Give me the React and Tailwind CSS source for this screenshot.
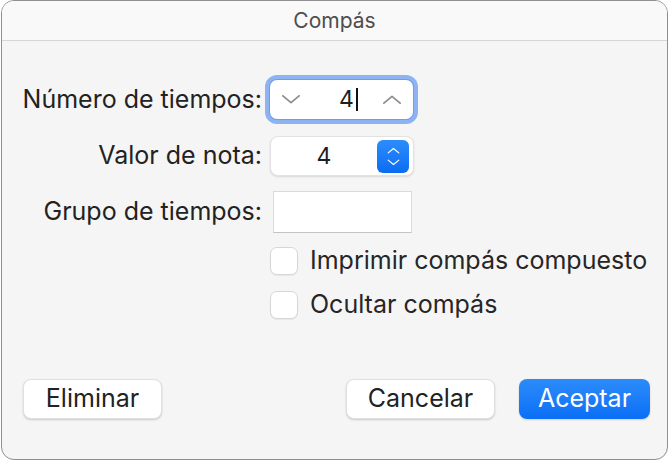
import React from "react";

const font = { fontFamily: "Inter, 'Liberation Sans', sans-serif" };

function Chevron({ up, className }) {
  return (
    <svg viewBox="0 0 22 10" className={className} fill="none">
      <path
        d={up ? "M2 9 L11 1.5 L20 9" : "M2 1 L11 8.5 L20 1"}
        stroke="currentColor"
        strokeWidth="2"
        strokeLinecap="round"
        strokeLinejoin="round"
      />
    </svg>
  );
}

function Checkbox({ label }) {
  return (
    <div className="flex items-center h-[28px]">
      <div className="w-[28px] h-[28px] rounded-[7px] bg-white border border-[#d6d6d6] shadow-[0_1px_1px_rgba(0,0,0,0.06)]" />
      <span className="ml-[12px] text-[25px] text-[#262626]">{label}</span>
    </div>
  );
}

export default function App() {
  return (
    <div className="w-[670px] h-[463px] bg-white" style={font}>
      <div className="ml-[1px] w-[667px] h-[460px] rounded-[13px] border border-[#8f8f8f] bg-[#f5f5f5] overflow-hidden flex flex-col">
        {/* Title bar */}
        <div className="h-[40px] shrink-0 bg-[#f9f9f9] border-b border-[#d6d6d6] flex items-center justify-center">
          <span className="text-[21px] text-[#4d4d4d]">Compás</span>
        </div>

        <div className="flex flex-col pt-[39px]">
          {/* Número de tiempos */}
          <div className="flex items-center h-[39px]">
            <div className="w-[260px] text-right text-[25px] text-[#222]">Número de tiempos:</div>
            <div className="ml-[8px] w-[143px] h-[39px] rounded-[7px] bg-white shadow-[0_0_0_1px_#6d9ded,0_0_0_5px_#8db3f3] flex items-center px-[10px]">
              <Chevron className="w-[22px] h-[9px] text-[#8e8e8e]" />
              <div className="flex-1 flex items-center justify-center pl-[14px]">
                <span className="text-[23px] text-[#1f1f1f] leading-none">4</span>
                <span className="ml-[2px] w-[2px] h-[23px] bg-[#111]" />
              </div>
              <Chevron up className="w-[22px] h-[9px] text-[#8e8e8e]" />
            </div>
          </div>

          {/* Valor de nota */}
          <div className="flex items-center h-[40px] mt-[17px]">
            <div className="w-[260px] text-right text-[25px] text-[#222]">Valor de nota:</div>
            <div className="ml-[8px] w-[144px] h-[40px] rounded-[8px] bg-white border border-[#e2e2e2] shadow-[0_1px_2px_rgba(0,0,0,0.12)] flex items-center pr-[4px]">
              <div className="flex-1 text-center text-[23px] text-[#1f1f1f]">4</div>
              <div className="w-[32px] h-[33px] rounded-[6px] bg-gradient-to-b from-[#2d8cfb] to-[#0a6cf3] flex flex-col items-center justify-center gap-[5px]">
                <Chevron up className="w-[13px] h-[7px] text-white" />
                <Chevron className="w-[13px] h-[7px] text-white" />
              </div>
            </div>
          </div>

          {/* Grupo de tiempos */}
          <div className="flex items-center h-[42px] mt-[15px]">
            <div className="w-[260px] text-right text-[25px] text-[#222]">Grupo de tiempos:</div>
            <div className="ml-[11px] w-[139px] h-[42px] bg-white border border-[#dadada] border-b-[#c4c4c4]" />
          </div>

          {/* Checkboxes */}
          <div className="ml-[268px] mt-[14px] flex flex-col gap-[16px]">
            <Checkbox label="Imprimir compás compuesto" />
            <Checkbox label="Ocultar compás" />
          </div>

          {/* Buttons */}
          <div className="mt-[60px] flex items-center pl-[21px] pr-[17px]">
            <button className="w-[139px] h-[40px] rounded-[8px] bg-white border border-[#e0e0e0] shadow-[0_1px_2px_rgba(0,0,0,0.18)] text-[25px] text-[#222]">
              Eliminar
            </button>
            <div className="flex-1" />
            <button className="w-[149px] h-[40px] rounded-[8px] bg-white border border-[#e0e0e0] shadow-[0_1px_2px_rgba(0,0,0,0.18)] text-[25px] text-[#222]">
              Cancelar
            </button>
            <button className="ml-[24px] w-[131px] h-[40px] rounded-[8px] bg-gradient-to-b from-[#2b8bfa] to-[#0a6ff6] shadow-[0_1px_2px_rgba(0,0,0,0.15)] text-[25px] text-white">
              Aceptar
            </button>
          </div>
        </div>
      </div>
    </div>
  );
}
